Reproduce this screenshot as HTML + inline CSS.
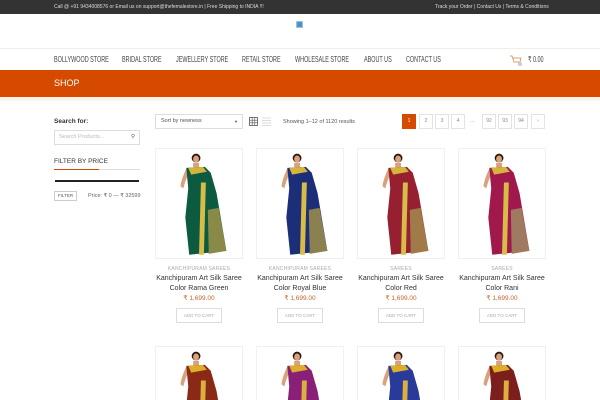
<!DOCTYPE html>
<html><head><meta charset="utf-8"><style>
*{margin:0;padding:0;box-sizing:border-box}
html,body{width:600px;height:400px;overflow:hidden}
body{background:#fff;font-family:"Liberation Sans",sans-serif;position:relative}
.abs{position:absolute}
.top{left:0;top:0;width:600px;height:14px;background:#333;color:#ddd;font-size:5px;line-height:14px}
.nav{top:48px;left:0;width:600px;height:22px;border-top:1px solid #eee;font-size:8px;color:#444;line-height:21px}
.nav span{position:absolute;top:0;transform:scaleX(.68);transform-origin:left}
.band{top:70px;left:0;width:600px;height:27px;background:#d64a00;color:#fff;font-size:9px;line-height:27px}
.card{width:88px;text-align:center}
.img{display:block;width:88px;height:111px;border:1px solid #f0f0f0}
.cat{font-size:5px;color:#aaa;margin-top:7px;letter-spacing:.2px;line-height:6px}
.t{font-size:7px;color:#333;line-height:10px;margin-top:2px}
.p{font-size:6.5px;color:#c8642a;margin-top:0;line-height:10px}
.btn{display:inline-block;border:1px solid #ddd;font-size:4.5px;color:#aaa;padding:4px 7px;margin-top:2px}
.pg{top:114px;width:14px;height:15px;border:1px solid #e3e3e3;font-size:5px;color:#888;text-align:center;line-height:13px}
.r2{height:54px;overflow:hidden}
</style></head><body>
<div class="abs top"><span class="abs" style="left:54px">Call @ +91 9434008576 or Email us on support@thefemalestore.in | Free Shipping to INDIA !!!</span><span class="abs" style="left:435px">Track your Order | Contact Us | Terms &amp; Conditions</span></div>
<div class="abs" style="left:296px;top:21px;width:7px;height:7px;background:#4f8fd0;border:1px solid #9cc"></div>
<div class="abs nav">
<span style="left:54px">BOLLYWOOD STORE</span><span style="left:122px">BRIDAL STORE</span><span style="left:176px">JEWELLERY STORE</span><span style="left:242px">RETAIL STORE</span><span style="left:295px">WHOLESALE STORE</span><span style="left:364px">ABOUT US</span><span style="left:406px">CONTACT US</span>
<svg class="abs" style="left:509px;top:5px" width="14" height="12"><path d="M1 2h2l2 6h6l1-4H4" fill="none" stroke="#d9a070" stroke-width="1"/><circle cx="11" cy="10" r="2" fill="#ccc"/></svg>
<span style="left:528px">₹ 0.00</span></div>
<div class="abs band"><span class="abs" style="left:54px">SHOP</span></div>
<div class="abs" style="left:0;top:97px;width:600px;height:4px;background:#fdf3ec"></div>
<div class="abs" style="left:54px;top:118px;font-size:6.5px;color:#333;font-weight:bold">Search for:</div>
<div class="abs" style="left:54px;top:130px;width:86px;height:15px;border:1px solid #ddd;font-size:5.5px;color:#bbb;line-height:13px;padding-left:4px">Search Products...<span class="abs" style="right:4px;color:#666">⚲</span></div>
<div class="abs" style="left:54px;top:158px;font-size:6.5px;color:#333">FILTER BY PRICE</div>
<div class="abs" style="left:54px;top:169px;width:86px;height:1px;background:#ddd"></div>
<div class="abs" style="left:54px;top:169px;width:45px;height:1px;background:#d64a00"></div>
<div class="abs" style="left:55px;top:180px;width:84px;height:2px;background:#222"></div>
<div class="abs" style="left:54px;top:191px;width:23px;height:10px;border:1px solid #ccc;font-size:4.5px;color:#555;text-align:center;line-height:8px">FILTER</div>
<div class="abs" style="left:88px;top:193px;font-size:5.5px;color:#666">Price: ₹ 0 — ₹ 32599</div>
<div class="abs" style="left:155px;top:114px;width:88px;height:15px;border:1px solid #ddd;font-size:5.5px;color:#555;line-height:13px;padding-left:5px">Sort by newness<span class="abs" style="right:4px;font-size:4px">▼</span></div>
<svg class="abs" style="left:249px;top:117px" width="24" height="10"><rect x=".5" y=".5" width="8" height="8" fill="none" stroke="#555" stroke-width=".8"/><path d="M3.2 .5v8M5.8 .5v8M.5 3.2h8M.5 5.8h8" stroke="#555" stroke-width=".6"/><path d="M13 1h9M13 3.5h9M13 6h9M13 8.5h9" stroke="#bbb" stroke-width=".6"/></svg>
<div class="abs" style="left:283px;top:119px;font-size:5.5px;color:#555">Showing 1–12 of 1120 results</div>
<div class="abs pg" style="left:402px;background:#d64a00;border-color:#d64a00;color:#fff">1</div>
<div class="abs pg" style="left:419px">2</div><div class="abs pg" style="left:435px">3</div><div class="abs pg" style="left:451px">4</div>
<div class="abs" style="left:470px;top:118px;font-size:5px;color:#999">...</div>
<div class="abs pg" style="left:482px">92</div><div class="abs pg" style="left:498px">93</div><div class="abs pg" style="left:514px">94</div><div class="abs pg" style="left:531px">›</div>

<svg width="0" height="0" style="position:absolute"><defs>
<g id="fig">
<circle cx="41" cy="9" r="4.5" fill="#2a1a12"/><ellipse cx="41" cy="10" rx="3" ry="3.6" fill="#d9a27c"/>
<path d="M38 14h6v5h-6z" fill="#d9a27c"/>
<path d="M31 20 Q26 30 25 38 L28 40 Q30 32 33 26z" fill="#d9a27c"/>
<path d="M52 22 Q57 30 56 40 L53 40 Q53 32 50 26z" fill="#d9a27c"/>
</g></defs></svg>

<div class="abs card" style="left:155px;top:148px"><svg class="img" viewBox="0 0 88 111"><use href="#fig"/><path d="M31 19 L50 18 L56 24 L62 45 L72 104 L34 108 L30 70 L33 40z" fill="#0c5a40"/><path d="M33 19 L48 18 L52 23 L36 26z" fill="#d4b43a"/><path d="M46 34 L51 34 L49 108 L44 108z" fill="#d8bc48"/><path d="M53 62 L64 60 L72 104 L54 107z" fill="#8a8a48"/></svg><div class="cat">KANCHIPURAM SAREES</div><div class="t">Kanchipuram Art Silk Saree Color Rama Green</div><div class="p">₹ 1,699.00</div><div class="btn">ADD TO CART</div></div>
<div class="abs card" style="left:256px;top:148px"><svg class="img" viewBox="0 0 88 111"><use href="#fig"/><path d="M31 19 L50 18 L56 24 L62 45 L72 104 L34 108 L30 70 L33 40z" fill="#1c2e78"/><path d="M33 19 L48 18 L52 23 L36 26z" fill="#d4b43a"/><path d="M46 34 L51 34 L49 108 L44 108z" fill="#d8bc48"/><path d="M53 62 L64 60 L72 104 L54 107z" fill="#8a8050"/></svg><div class="cat">KANCHIPURAM SAREES</div><div class="t">Kanchipuram Art Silk Saree Color Royal Blue</div><div class="p">₹ 1,699.00</div><div class="btn">ADD TO CART</div></div>
<div class="abs card" style="left:357px;top:148px"><svg class="img" viewBox="0 0 88 111"><use href="#fig"/><path d="M31 19 L50 18 L56 24 L62 45 L72 104 L34 108 L30 70 L33 40z" fill="#962030"/><path d="M33 19 L48 18 L52 23 L36 26z" fill="#d4b43a"/><path d="M46 34 L51 34 L49 108 L44 108z" fill="#d8bc48"/><path d="M53 62 L64 60 L72 104 L54 107z" fill="#a07a48"/></svg><div class="cat">SAREES</div><div class="t">Kanchipuram Art Silk Saree Color Red</div><div class="p">₹ 1,699.00</div><div class="btn">ADD TO CART</div></div>
<div class="abs card" style="left:458px;top:148px"><svg class="img" viewBox="0 0 88 111"><use href="#fig"/><path d="M31 19 L50 18 L56 24 L62 45 L72 104 L34 108 L30 70 L33 40z" fill="#a0184c"/><path d="M33 19 L48 18 L52 23 L36 26z" fill="#d4b43a"/><path d="M46 34 L51 34 L49 108 L44 108z" fill="#d8bc48"/><path d="M53 62 L64 60 L72 104 L54 107z" fill="#a07a60"/></svg><div class="cat">SAREES</div><div class="t">Kanchipuram Art Silk Saree Color Rani</div><div class="p">₹ 1,699.00</div><div class="btn">ADD TO CART</div></div>
<div class="abs card r2" style="left:155px;top:346px"><svg class="img" viewBox="0 0 88 111"><use href="#fig"/><path d="M31 19 L50 18 L56 24 L62 45 L72 104 L34 108 L30 70 L33 40z" fill="#8a2a16"/><path d="M33 19 L48 18 L52 23 L36 26z" fill="#dcae2a"/><path d="M46 34 L51 34 L49 108 L44 108z" fill="#dcb040"/></svg></div>
<div class="abs card r2" style="left:256px;top:346px"><svg class="img" viewBox="0 0 88 111"><use href="#fig"/><path d="M31 19 L50 18 L56 24 L62 45 L72 104 L34 108 L30 70 L33 40z" fill="#8a1f78"/><path d="M33 19 L48 18 L52 23 L36 26z" fill="#dcae2a"/><path d="M46 34 L51 34 L49 108 L44 108z" fill="#dcb040"/></svg></div>
<div class="abs card r2" style="left:357px;top:346px"><svg class="img" viewBox="0 0 88 111"><use href="#fig"/><path d="M31 19 L50 18 L56 24 L62 45 L72 104 L34 108 L30 70 L33 40z" fill="#283a9a"/><path d="M33 19 L48 18 L52 23 L36 26z" fill="#dcae2a"/><path d="M46 34 L51 34 L49 108 L44 108z" fill="#dcb040"/></svg></div>
<div class="abs card r2" style="left:458px;top:346px"><svg class="img" viewBox="0 0 88 111"><use href="#fig"/><path d="M31 19 L50 18 L56 24 L62 45 L72 104 L34 108 L30 70 L33 40z" fill="#7c1e1c"/><path d="M33 19 L48 18 L52 23 L36 26z" fill="#dcae2a"/><path d="M46 34 L51 34 L49 108 L44 108z" fill="#dcb040"/></svg></div>
</body></html>
